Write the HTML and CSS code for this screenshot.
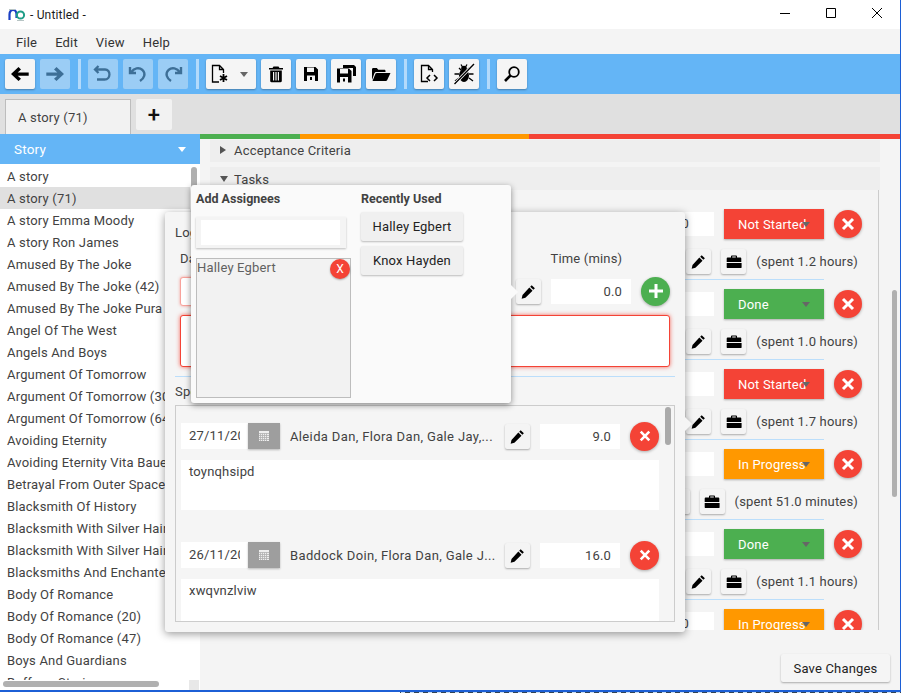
FILE: index.html
```html
<!DOCTYPE html>
<html lang="en">
<head>
<meta charset="utf-8">
<title>Untitled</title>
<link rel="stylesheet" href="styles.css">
</head>
<body>
<svg class="defs" width="0" height="0" aria-hidden="true">
  <symbol id="i-pencil" viewBox="0 0 16 16"><path d="M11.400 1.200l3.400 3.400-1.600 1.600-3.400-3.400zM8.900 3.700l3.400 3.400-7.600 7.600-4 .9.900-4z" fill="#000"/></symbol>
  <symbol id="i-case" viewBox="0 0 16 16"><path d="M5 3.600V2.200C5 1.700 5.400 1.400 5.800 1.400h4.400c.4 0 .8.300.8.800v1.400h3.400c.5 0 .9.400.9.900V8H.7V4.500c0-.5.400-.9.900-.9zM6.200 3.600h3.600V2.600H6.200zM.7 9h14.900v4.200c0 .5-.4.900-.9.900H1.600c-.5 0-.9-.4-.9-.9z" fill="#000"/></symbol>
  <symbol id="i-cal" viewBox="0 0 10 10"><path d="M0 0h10v10H0z" fill="#efefef"/><path d="M0 2.500h10M0 4.500h10M0 6.500h10M0 8.500h10M1.500 2.500V10M3.500 2.500V10M5.500 2.500V10M7.500 2.500V10" stroke="#b0b0b0" stroke-width=".8"/></symbol>
</svg>
<div class="window">
  <header class="titlebar">
    <svg class="logo" viewBox="0 0 18 14" width="18" height="14"><path d="M1.500 12V6.500C1.500 3.500 3.200 2 5 2s3.500 1.500 3.500 4.500V10" fill="none" stroke="#1a3fc4" stroke-width="2.200"/><circle cx="12.500" cy="7" r="3.600" fill="none" stroke="#1f9e88" stroke-width="2"/><path d="M1 1.500h6M9 12.500h7" stroke="#b7c4c4" stroke-width="1"/></svg>
    <span class="title">- Untitled -</span>
    <div class="wincontrols">
      <svg width="46" height="29" viewBox="0 0 46 29"><path d="M18 13.500h10" stroke="#000"/></svg>
      <svg width="46" height="29" viewBox="0 0 46 29"><path d="M18.500 8.500h9v9h-9z" fill="none" stroke="#000"/></svg>
      <svg width="46" height="29" viewBox="0 0 46 29"><path d="M18 8l10 10M28 8L18 18" stroke="#000" fill="none"/></svg>
    </div>
  </header>
  <nav class="menubar"><span>File</span><span>Edit</span><span>View</span><span>Help</span></nav>
  <div class="toolbar">
    <button class="tool"><svg width="20" height="18" viewBox="0 0 20 18"><path d="M1 9l7.500-7 2.500 2.400-3.300 3h11v3.300h-11l3.300 3L8.500 16z" fill="#000"/></svg></button>
    <button class="tool off"><svg width="20" height="18" viewBox="0 0 20 18"><path d="M19 9l-7.500-7L9 4.400l3.300 3H1.300v3.300h11L9 13.700l2.500 2.300z" fill="#000"/></svg></button>
    <i class="sep"></i>
    <button class="tool off"><svg width="20" height="20" viewBox="0 0 20 20"><path d="M5.500 2L2 5.500 5.500 9M2.500 5.500H12c6 0 6 10-.5 10H6" fill="none" stroke="#000" stroke-width="2.300"/><path d="M4 15.500h2" stroke="#000" stroke-width="2.300"/></svg></button>
    <button class="tool off"><svg width="20" height="20" viewBox="0 0 20 20"><path d="M2 3v6h6M3 8.500C6 4 11 3 14.500 6c3.500 3.500 2 8-2.500 11" fill="none" stroke="#000" stroke-width="2.400"/></svg></button>
    <button class="tool off"><svg width="20" height="20" viewBox="0 0 20 20"><path d="M18 3v6h-6M17 8.500C14 4 9 3 5.500 6 2 9.500 3.500 14 8 17" fill="none" stroke="#000" stroke-width="2.400"/></svg></button>
    <i class="sep"></i>
    <button class="tool wide">
      <svg width="20" height="20" viewBox="0 0 20 20"><path d="M9 18H2.500V1.500h7l4 4V9M9.500 1.500v4h4" fill="none" stroke="#000" stroke-width="1.300"/><path d="M13.500 10v8M10 12l7 4M17 12l-7 4" stroke="#000" stroke-width="1.800"/></svg>
      <i class="caret dark"></i>
    </button>
    <button class="tool"><svg width="16" height="18" viewBox="0 0 16 18"><path d="M5.500 1.500h5l1 1.500H15v1.500H1V3h3.500zM2.200 5.500h11.600V16c0 .7-.5 1.200-1.200 1.200H3.400c-.7 0-1.200-.5-1.200-1.200zM5 7v8.500h1.200V7zM7.400 7v8.500h1.200V7zM9.800 7v8.500H11V7z" fill="#000" fill-rule="evenodd"/></svg></button>
    <button class="tool"><svg width="16" height="16" viewBox="0 0 16 16"><path d="M1 1h11.500L15 3.500V15H1zM4 1.500V6h7V1.500zM4 9.500V15h8V9.500zM7 11h2v3H7z" fill="#000" fill-rule="evenodd"/></svg></button>
    <button class="tool"><svg width="20" height="18" viewBox="0 0 20 18"><path d="M7 0h11l2 2v9h-3V3H7z" fill="#000"/><path d="M1 3.500h12l2.500 2.500v11.500H1zM4 4v4.500h8V4zM4 12v5.500h8V12zM7 13.500h2v3H7z" fill="#000" fill-rule="evenodd"/></svg></button>
    <button class="tool"><svg width="20" height="16" viewBox="0 0 20 16"><path d="M1 14V3.500C1 2.700 1.500 2 2.300 2h3.500l1.500 1.800h6c.7 0 1.200.5 1.200 1.200v1H5.500C4.500 6 3.800 6.500 3.400 7.300z" fill="#000"/><path d="M1.500 15h13.300c.6 0 1-.3 1.300-.8L19.500 7H5.800c-.6 0-1 .3-1.300.8z" fill="#000"/></svg></button>
    <i class="sep"></i>
    <button class="tool"><svg width="20" height="20" viewBox="0 0 20 20"><path d="M9 17.500H2.500v-16h7l4 4V8M9.500 1.500v4h4" fill="none" stroke="#000" stroke-width="1.300"/><path d="M11 11l-3 3 3 3M15 11l3 3-3 3" fill="none" stroke="#000" stroke-width="1.500"/></svg></button>
    <button class="tool"><svg width="22" height="22" viewBox="0 0 22 22"><ellipse cx="11" cy="12.500" rx="5" ry="6.500" fill="#000"/><circle cx="11" cy="5.500" r="2.800" fill="#000"/><path d="M6 5l2.500 2.500M16 5l-2.500 2.500M1.500 11H6M16 11h4.500M2 18l4-3M20 18l-4-3M8 1.500l1.500 2.500M14 1.500L12.500 4" stroke="#000" stroke-width="1.300"/><path d="M21 1L1.500 21" stroke="#fff" stroke-width="3"/><path d="M21 1L1.500 21" stroke="#000" stroke-width="1.400"/></svg></button>
    <i class="sep"></i>
    <button class="tool"><svg width="18" height="18" viewBox="0 0 18 18"><circle cx="11" cy="7" r="4.800" fill="none" stroke="#000" stroke-width="1.800"/><path d="M7.500 10.500L2 16" stroke="#000" stroke-width="2.600"/></svg></button>
  </div>
  <div class="tabbar">
    <div class="tab">A story (71)</div>
    <button class="addtab">+</button>
  </div>
  <div class="main">
    <aside class="sidebar">
      <div class="sidehead"><span>Story</span><i class="caret light"></i></div>
      <ul class="stories">
        <li>A story</li>
        <li class="sel">A story (71)</li>
        <li>A story Emma Moody</li>
        <li>A story Ron James</li>
        <li>Amused By The Joke</li>
        <li>Amused By The Joke (42)</li>
        <li>Amused By The Joke Pura</li>
        <li>Angel Of The West</li>
        <li>Angels And Boys</li>
        <li>Argument Of Tomorrow</li>
        <li>Argument Of Tomorrow (30)</li>
        <li>Argument Of Tomorrow (64)</li>
        <li>Avoiding Eternity</li>
        <li>Avoiding Eternity Vita Bauer</li>
        <li>Betrayal From Outer Space</li>
        <li>Blacksmith Of History</li>
        <li>Blacksmith With Silver Hair</li>
        <li>Blacksmith With Silver Hair</li>
        <li>Blacksmiths And Enchanted</li>
        <li>Body Of Romance</li>
        <li>Body Of Romance (20)</li>
        <li>Body Of Romance (47)</li>
        <li>Boys And Guardians</li>
        <li>Buffoon Stories</li>
      </ul>
      <i class="vthumb"></i>
      <div class="hscroll"><i class="hthumb"></i><i class="corner"></i></div>
    </aside>
    <section class="content">
      <div class="progress"><i class="p-green"></i><i class="p-orange"></i><i class="p-red"></i></div>
      <div class="section-row"><i class="tri-right"></i>Acceptance Criteria</div>
      <div class="section-row tasks-head"><i class="tri-down"></i>Tasks</div>
      <div class="tasks">
        <div class="task">
          <div class="task-top"><div class="taskname">0</div><button class="status red">Not Started<i class="caret grey"></i></button><button class="round"><svg width="14" height="14" viewBox="0 0 14 14"><path d="M2 2l10 10M12 2L2 12" stroke="#fff" stroke-width="3"/></svg></button></div>
          <div class="task-bottom"><button class="mini"><svg width="15" height="15"><use href="#i-pencil"/></svg></button><button class="mini"><svg width="16" height="16"><use href="#i-case"/></svg></button><span class="spent">(spent 1.2 hours)</span></div>
        </div>
        <div class="task">
          <div class="task-top"><div class="taskname"></div><button class="status green">Done<i class="caret grey"></i></button><button class="round"><svg width="14" height="14" viewBox="0 0 14 14"><path d="M2 2l10 10M12 2L2 12" stroke="#fff" stroke-width="3"/></svg></button></div>
          <div class="task-bottom"><button class="mini"><svg width="15" height="15"><use href="#i-pencil"/></svg></button><button class="mini"><svg width="16" height="16"><use href="#i-case"/></svg></button><span class="spent">(spent 1.0 hours)</span></div>
        </div>
        <div class="task">
          <div class="task-top"><div class="taskname"></div><button class="status red">Not Started<i class="caret grey"></i></button><button class="round"><svg width="14" height="14" viewBox="0 0 14 14"><path d="M2 2l10 10M12 2L2 12" stroke="#fff" stroke-width="3"/></svg></button></div>
          <div class="task-bottom"><button class="mini"><svg width="15" height="15"><use href="#i-pencil"/></svg></button><button class="mini"><svg width="16" height="16"><use href="#i-case"/></svg></button><span class="spent">(spent 1.7 hours)</span></div>
        </div>
        <div class="task">
          <div class="task-top"><div class="taskname"></div><button class="status orange">In Progress<i class="caret grey"></i></button><button class="round"><svg width="14" height="14" viewBox="0 0 14 14"><path d="M2 2l10 10M12 2L2 12" stroke="#fff" stroke-width="3"/></svg></button></div>
          <div class="task-bottom"><button class="mini"><svg width="15" height="15"><use href="#i-pencil"/></svg></button><button class="mini"><svg width="16" height="16"><use href="#i-case"/></svg></button><span class="spent">(spent 51.0 minutes)</span></div>
        </div>
        <div class="task">
          <div class="task-top"><div class="taskname"></div><button class="status green">Done<i class="caret grey"></i></button><button class="round"><svg width="14" height="14" viewBox="0 0 14 14"><path d="M2 2l10 10M12 2L2 12" stroke="#fff" stroke-width="3"/></svg></button></div>
          <div class="task-bottom"><button class="mini"><svg width="15" height="15"><use href="#i-pencil"/></svg></button><button class="mini"><svg width="16" height="16"><use href="#i-case"/></svg></button><span class="spent">(spent 1.1 hours)</span></div>
        </div>
        <div class="task">
          <div class="task-top"><div class="taskname">0</div><button class="status orange">In Progress<i class="caret grey"></i></button><button class="round"><svg width="14" height="14" viewBox="0 0 14 14"><path d="M2 2l10 10M12 2L2 12" stroke="#fff" stroke-width="3"/></svg></button></div>
        </div>
        <i class="pagethumb"></i>
      </div>
      <footer class="savebar"><button class="save">Save Changes</button></footer>
    </section>
  </div>
</div>
<div class="bottomstrip"></div>

<div class="logpop">
  <i class="arrow log-arrow"></i>
  <div class="logtitle">Log</div>
  <div class="loglabels"><span>Date</span><span class="timelabel">Time (mins)</span></div>
  <div class="logform">
    <div class="dateinput invalid"></div>
    <button class="mini penbtn"><svg width="15" height="15"><use href="#i-pencil"/></svg></button>
    <div class="num">0.0</div>
    <button class="round plus"><svg width="16" height="16" viewBox="0 0 16 16"><path d="M8 1v14M1 8h14" stroke="#fff" stroke-width="3"/></svg></button>
  </div>
  <div class="logarea"></div>
  <hr class="logsep">
  <div class="spent-label">Spent</div>
  <div class="entries">
    <div class="entry">
      <div class="entry-row">
        <div class="entrydate"><span>27/11/2020</span></div><button class="calbtn"><svg width="10" height="10"><use href="#i-cal"/></svg></button>
        <div class="names">Aleida Dan, Flora Dan, Gale Jay,...</div>
        <button class="mini"><svg width="15" height="15"><use href="#i-pencil"/></svg></button>
        <div class="num">9.0</div>
        <button class="round"><svg width="12" height="12" viewBox="0 0 14 14"><path d="M2 2l10 10M12 2L2 12" stroke="#fff" stroke-width="3"/></svg></button>
      </div>
      <div class="note">toynqhsipd</div>
    </div>
    <div class="entry">
      <div class="entry-row">
        <div class="entrydate"><span>26/11/2020</span></div><button class="calbtn"><svg width="10" height="10"><use href="#i-cal"/></svg></button>
        <div class="names">Baddock Doin, Flora Dan, Gale J...</div>
        <button class="mini"><svg width="15" height="15"><use href="#i-pencil"/></svg></button>
        <div class="num">16.0</div>
        <button class="round"><svg width="12" height="12" viewBox="0 0 14 14"><path d="M2 2l10 10M12 2L2 12" stroke="#fff" stroke-width="3"/></svg></button>
      </div>
      <div class="note">xwqvnzlviw</div>
    </div>
    <i class="entrythumb"></i>
  </div>
</div>

<div class="assignpop">
  <i class="arrow assign-arrow"></i>
  <div class="assign-col">
    <div class="poptitle">Add Assignees</div>
    <div class="searchwrap"><div class="searchbox"></div></div>
    <div class="assigned">
      <span>Halley Egbert</span>
      <button class="removex">X</button>
    </div>
  </div>
  <div class="recent-col">
    <div class="poptitle">Recently Used</div>
    <button class="person">Halley Egbert</button>
    <button class="person">Knox Hayden</button>
  </div>
</div>
</body>
</html>
```
FILE: styles.css
```css
* { box-sizing: border-box; }
html, body { margin: 0; padding: 0; }
body {
  width: 901px;
  height: 693px;
  overflow: hidden;
  background: #fff;
  position: relative;
  font-family: Roboto, "Liberation Sans", sans-serif;
  font-size: 13px;
  letter-spacing: .18px;
  color: #424242;
}
button { font: inherit; letter-spacing: inherit; border: 0; padding: 0; cursor: default; }
.defs { position: absolute; }
.window {
  width: 901px;
  height: 692px;
  display: flex;
  flex-direction: column;
  border-right: 1px solid #1c5fd6;
  border-bottom: 2px solid #1c5fd6;
}
.titlebar { height: 29px; display: flex; align-items: center; padding-left: 8px; flex: none; background: #fff; }
.logo { flex: none; }
.title { margin-left: 4px; color: #1a1a1a; font-size: 12px; }
.wincontrols { margin-left: auto; display: flex; }
.wincontrols svg { display: block; }
.menubar { height: 25px; flex: none; background: #f4f4f4; display: flex; align-items: center; padding: 2px 0 0 16px; gap: 18px; color: #333; }
.toolbar { height: 40px; flex: none; background: #64b5f6; display: flex; align-items: center; padding-left: 5px; gap: 5px; }
.tool { width: 30px; height: 30px; background: #f5f5f5; border-radius: 2px; box-shadow: 0 1px 2px rgba(0,0,0,.3); display: flex; align-items: center; justify-content: center; flex: none; }
.tool.off { opacity: .38; box-shadow: none; }
.tool.wide { width: 50px; justify-content: flex-start; padding-left: 4px; gap: 10px; }
.sep { width: 3px; height: 30px; background: #b3dafb; margin: 0 2px 0 3px; flex: none; }
.caret { display: block; width: 0; height: 0; border-left: 4px solid transparent; border-right: 4px solid transparent; border-top: 5px solid #555; }
.caret.dark { border-top-color: #666; }
.caret.light { border-top-color: #fff; }
.caret.grey { border-top-color: #666; position: absolute; right: 14px; top: 13px; }
.tabbar { height: 40px; flex: none; background: #e0e0e0; display: flex; align-items: flex-start; padding: 5px 0 0 5px; gap: 5px; }
.tab { width: 126px; height: 35px; background: #f2f2f2; border: 1px solid #bdbdbd; border-bottom: 0; padding: 10px 0 0 12px; }
.addtab { width: 36px; height: 31px; background: #f2f2f2; border-radius: 2px; font-size: 22px; font-weight: 500; color: #111; line-height: 28px; }
.main { flex: 1; display: flex; min-height: 0; }
.sidebar { width: 200px; flex: none; background: #fff; position: relative; overflow: hidden; }
.sidehead { height: 30px; background: #64b5f6; color: #fff; display: flex; align-items: center; justify-content: space-between; padding: 0 14px; font-size: 13.5px; }
.stories { list-style: none; margin: 1px 0 0; padding: 0; height: 515px; overflow: hidden; }
.stories li { height: 22px; line-height: 24px; padding-left: 7px; white-space: nowrap; overflow: hidden; width: 190px; }
.stories .sel { background: #e0e0e0; }
.vthumb { position: absolute; left: 191px; top: 33px; width: 6px; height: 80px; background: #b0b0b0; border-radius: 3px; }
.hscroll { position: absolute; left: 0; bottom: 0; height: 10px; width: 200px; background: #fff; }
.hthumb { position: absolute; left: 3px; top: 1px; width: 156px; height: 6px; background: #b0b0b0; border-radius: 3px; }
.corner { position: absolute; left: 189px; top: 0; width: 10px; height: 10px; background: #e8e8e8; }
.content { flex: 1; background: #f4f4f4; display: flex; flex-direction: column; min-width: 0; position: relative; }
.progress { height: 5px; display: flex; flex: none; }
.p-green { width: 100px; background: #4caf50; }
.p-orange { width: 229px; background: #ff9800; }
.p-red { flex: 1; background: #f44336; }
.section-row { flex: none; margin: 1px 20px 0 10px; height: 22px; background: #eee; display: flex; align-items: center; padding: 0 0 2px 10px; gap: 8px; }
.tasks-head { margin-top: 5px; height: 23px; padding: 1px 0 0 10px; gap: 6px; }
.tri-right { width: 0; height: 0; border-top: 4px solid transparent; border-bottom: 4px solid transparent; border-left: 6px solid #555; }
.tri-down { width: 0; height: 0; border-left: 4px solid transparent; border-right: 4px solid transparent; border-top: 6px solid #555; }
.tasks { height: 440px; flex: none; margin: 0 21px 0 10px; border-right: 1px solid #ccc; padding-top: 19px; overflow: visible; clip-path: inset(0 -30px 0 0); position: relative; }
.task { height: 80px; margin-right: 0; }
.task-top { display: flex; align-items: center; height: 30px; padding-right: 16px; justify-content: flex-end; }
.taskname { width: 200px; height: 24px; background: #fff; margin-right: 10px; text-align: right; line-height: 24px; padding-right: 25px; }
.status { width: 100px; height: 30px; position: relative; color: #fff; text-align: left; padding-left: 14px; box-shadow: 0 1px 2px rgba(0,0,0,.3); font-size: 13px; flex: none; }
.red { background: #f44336; }
.green { background: #4caf50; }
.orange { background: #ff9800; }
.round { width: 28px; height: 28px; border-radius: 50%; background: #f44336; margin-left: 10px; display: flex; align-items: center; justify-content: center; box-shadow: 0 1px 3px rgba(0,0,0,.3); flex: none; }
.task-bottom { display: flex; align-items: center; justify-content: flex-end; gap: 10px; margin-top: 10px; height: 25px; padding-right: 20px; position: relative; }
.task-bottom::after { content: ""; position: absolute; left: 0; right: 54px; top: 30px; border-top: 1px solid #bbdefb; }
.mini { width: 25px; height: 25px; background: #f4f4f4; border-radius: 2px; box-shadow: 0 1px 2px rgba(0,0,0,.3); display: flex; align-items: center; justify-content: center; flex: none; }
.mini svg { display: block; }
.spent { white-space: nowrap; }
.pagethumb { position: absolute; left: 682px; top: 100px; width: 5px; height: 207px; background: #b0b0b0; border-radius: 3px; }
.savebar { flex: 1; display: flex; justify-content: flex-end; align-items: flex-end; padding: 0 10px 8px 0; }
.save { width: 109px; height: 28px; background: #f5f5f5; color: #222; border-radius: 2px; box-shadow: 0 1px 2px rgba(0,0,0,.3); }
.bottomstrip { height: 1px; background: linear-gradient(90deg, #fff 0 400px, transparent 400px), repeating-linear-gradient(90deg, #345 0 5px, #cde 5px 9px); }

.logpop {
  position: absolute; left: 165px; top: 212px; width: 520px; height: 420px;
  background: #f5f5f5; border-radius: 3px; box-shadow: 0 2px 8px rgba(0,0,0,.4);
  padding: 13px 10px 0;
}
.arrow { position: absolute; width: 10px; height: 10px; transform: rotate(45deg); background: #f5f5f5; }
.log-arrow { right: -5px; top: 207px; box-shadow: 2px -2px 3px rgba(0,0,0,.08); }
.logtitle { height: 20px; line-height: 15px; }
.loglabels { display: flex; padding-left: 5px; height: 22px; margin-top: 4px; line-height: 20px; }
.timelabel { margin-left: 343px; }
.logform { display: flex; align-items: center; height: 30px; padding-left: 5px; margin-top: 5px; }
.dateinput { width: 100px; height: 29px; background: #fff; border: 1px solid #f8a29b; border-radius: 3px; box-shadow: 0 0 3px rgba(244,67,54,.5); }
.penbtn { margin-left: 236px; }
.logform .num { margin-left: 10px; }
.num { width: 80px; height: 25px; background: #fff; text-align: right; padding-right: 9px; line-height: 25px; flex: none; }
.plus { width: 29px; height: 29px; background: #4caf50; }
.logarea { margin: 9px 5px 0; height: 52px; background: #fff; border: 1px solid #f44336; border-radius: 3px; box-shadow: 0 0 4px rgba(244,67,54,.8); }
.logsep { margin: 9px 0 0; border: 0; border-top: 1px solid #bbdefb; }
.spent-label { height: 28px; line-height: 30px; }
.entries { height: 217px; margin-top: 0; border: 1px solid #ccc; overflow: hidden; position: relative; padding: 17px 15px 0 5px; }
.entry { height: 119px; }
.entry-row { display: flex; align-items: center; height: 26px; }
.entrydate { width: 67px; height: 26px; background: #fff; line-height: 26px; padding: 0 8px 0 8px; flex: none; }
.entrydate span { display: block; overflow: hidden; white-space: nowrap; }
.calbtn { width: 32px; height: 26px; background: #9e9e9e; display: flex; align-items: center; justify-content: center; box-shadow: 0 1px 2px rgba(0,0,0,.25); flex: none; }
.calbtn svg { display: block; }
.names { width: 225px; padding-left: 10px; white-space: nowrap; overflow: hidden; flex: none; letter-spacing: .36px; }
.entry-row .num { margin-left: 10px; }
.entry-row .round { margin-left: 10px; width: 29px; height: 29px; }
.note { margin-top: 11px; height: 50px; background: #fff; padding: 4px 8px; }
.entrythumb { position: absolute; right: 3px; top: 1px; width: 6px; height: 38px; background: #aaa; border-radius: 3px; }

.assignpop {
  position: absolute; left: 191px; top: 185px; width: 320px; height: 218px;
  background: #fafafa; border-radius: 3px; box-shadow: 0 2px 6px rgba(0,0,0,.45);
  display: flex; padding: 7px 5px 0;
}
.assign-arrow { right: -5px; top: 102px; background: #fafafa; }
.assign-col { width: 155px; flex: none; }
.recent-col { margin-left: 10px; }
.poptitle { font-weight: 700; font-size: 12.5px; letter-spacing: 0; color: #424242; height: 14px; line-height: 14px; }
.searchwrap { margin-top: 11px; width: 150px; height: 31px; background: #f4f4f4; box-shadow: 0 1px 2px rgba(0,0,0,.25); padding: 3px 5px; }
.searchbox { width: 139px; height: 25px; background: #fff; }
.assigned { margin-top: 10px; height: 140px; background: #f2f2f2; border: 1px solid #bdbdbd; position: relative; color: #616161; padding-left: 0; line-height: 18px; }
.removex { position: absolute; right: 0; top: 0; width: 20px; height: 20px; border-radius: 50%; background: #f44336; color: #fff; font-size: 12px; box-shadow: 0 1px 2px rgba(0,0,0,.3); }
.person { display: block; width: 102px; height: 29px; background: #f0f0f0; color: #222; border-radius: 2px; box-shadow: 0 1px 2px rgba(0,0,0,.25); margin-bottom: 5px; }
.recent-col .poptitle + .person { margin-top: 6px; }
```
